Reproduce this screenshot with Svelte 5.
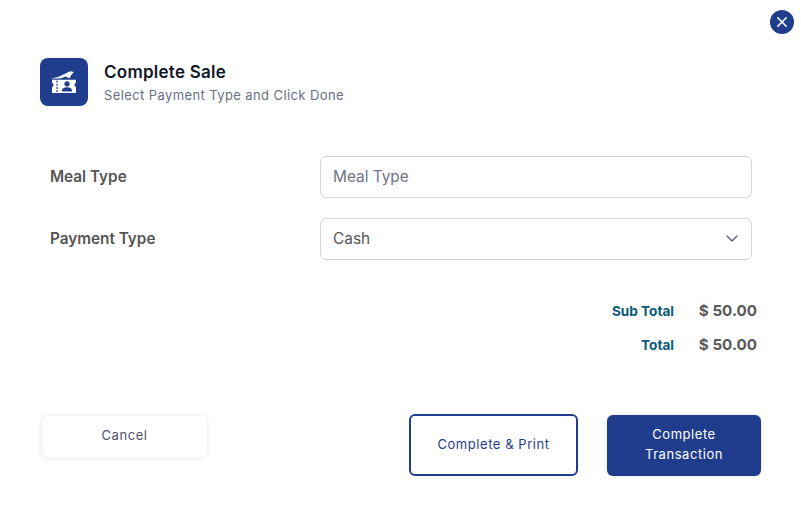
<script lang="ts">
  let mealType = $state('');
  let paymentType = $state('Cash');
</script>

<div class="modal">
  <div class="close-row">
    <button type="button" class="close" aria-label="Close">
      <svg viewBox="0 0 12 12" width="12" height="12" fill="none" stroke="#fff" stroke-width="1.6" stroke-linecap="round">
        <path d="M1.8 1.8l8.4 8.4M10.2 1.8l-8.4 8.4" />
      </svg>
    </button>
  </div>

  <header class="head">
    <div class="badge">
      <svg viewBox="0 0 26 24" width="26" height="24" fill="#fff">
        <path d="M0 8.6 7 7 19.4 1.2 23 2 20.6 4.4 18.4 8.4 15 6.4 9 8.6z" />
        <path fill-rule="evenodd" d="M1 9.8h24v3a2.2 2.2 0 0 0 0 4.2V23H1v-6a2.2 2.2 0 0 0 0-4.2zM16 11.2a2.7 2.7 0 1 0 .01 0zM10.8 21.4h10.4c0-3-2-4.2-5.2-4.2s-5.2 1.2-5.2 4.2zM5.4 10.6v2h1.2v-2zm0 3.2v2h1.2v-2zm0 3.2v2h1.2v-2zm0 3v2h1.2v-2z" />
      </svg>
    </div>
    <div class="titles">
      <h1>Complete Sale</h1>
      <p>Select Payment Type and Click Done</p>
    </div>
  </header>

  <div class="form">
    <label class="row">
      <span>Meal Type</span>
      <input type="text" placeholder="Meal Type" bind:value={mealType} />
    </label>
    <label class="row">
      <span>Payment Type</span>
      <div class="select-wrap">
        <select bind:value={paymentType}>
          <option>Cash</option>
          <option>Card</option>
        </select>
        <svg class="chev" viewBox="0 0 12 7" width="12" height="7" fill="none" stroke="#5f6676" stroke-width="1.5" stroke-linecap="round" stroke-linejoin="round">
          <path d="M1 1l5 5 5-5" />
        </svg>
      </div>
    </label>
  </div>

  <div class="totals">
    <div class="total"><span>Sub Total</span><strong>$ 50.00</strong></div>
    <div class="total"><span>Total</span><strong>$ 50.00</strong></div>
  </div>

  <footer class="actions">
    <button type="button" class="btn cancel">Cancel</button>
    <div class="right">
      <button type="button" class="btn outline">Complete &amp; Print</button>
      <button type="button" class="btn solid">Complete Transaction</button>
    </div>
  </footer>
</div>

<style>
  :global(body) {
    margin: 0;
    background: #fff;
  }
  .modal {
    width: 801px;
    height: 511px;
    box-sizing: border-box;
    padding: 10px 7px 0 40px;
    font-family: Inter, "Liberation Sans", sans-serif;
    color: #5a5a5a;
  }
  .close-row {
    display: flex;
    justify-content: flex-end;
    height: 24px;
  }
  .close {
    width: 24px;
    height: 24px;
    padding: 0;
    border: none;
    border-radius: 50%;
    background: #1f3d8c;
    display: flex;
    align-items: center;
    justify-content: center;
    cursor: pointer;
  }
  .head {
    display: flex;
    align-items: center;
    gap: 16px;
    margin-top: 24px;
  }
  .badge {
    width: 48px;
    height: 48px;
    border-radius: 8px;
    background: #1f3d8c;
    display: flex;
    align-items: center;
    justify-content: center;
  }
  h1 {
    margin: 2px 0 0;
    font-size: 17px;
    line-height: 20px;
    font-weight: 600;
    letter-spacing: 0.25px;
    color: #101828;
  }
  .titles p {
    margin: 4px 0 0;
    font-size: 13px;
    line-height: 18px;
    letter-spacing: 0.4px;
    color: #667085;
  }
  .form {
    margin-top: 50px;
    width: 712px;
    display: flex;
    flex-direction: column;
    gap: 20px;
  }
  .row {
    display: grid;
    grid-template-columns: 270px 432px;
    align-items: center;
    padding-left: 10px;
  }
  .row span {
    padding-bottom: 2px;
    font-size: 15.3px;
    font-weight: 600;
    color: #555;
  }
  input,
  select {
    width: 100%;
    height: 42px;
    box-sizing: border-box;
    padding: 0 12px 2px;
    border: 1px solid #d5d8e0;
    border-radius: 6px;
    background: #fff;
    font: inherit;
    font-size: 15.4px;
    color: #555;
    outline: none;
    appearance: none;
  }
  input::placeholder {
    color: #6f7686;
    opacity: 1;
  }
  .select-wrap {
    position: relative;
  }
  .chev {
    position: absolute;
    right: 14px;
    top: 17px;
    pointer-events: none;
  }
  .totals {
    margin-top: 40px;
    width: 717px;
    display: flex;
    flex-direction: column;
    gap: 13px;
  }
  .total {
    display: grid;
    grid-template-columns: 1fr 83px;
    align-items: center;
    height: 21px;
    text-align: right;
  }
  .total span {
    font-size: 13.6px;
    font-weight: 700;
    color: #0b5a78;
  }
  .total strong {
    font-size: 15.2px;
    font-weight: 700;
    color: #5a5a5a;
  }
  .actions {
    margin-top: 59px;
    width: 721px;
    display: flex;
    justify-content: space-between;
    align-items: flex-start;
  }
  .right {
    display: flex;
    gap: 29px;
    align-items: flex-end;
  }
  .btn {
    box-sizing: border-box;
    font: inherit;
    font-size: 13px;
    line-height: 20px;
    letter-spacing: 0.55px;
    border-radius: 6px;
    cursor: pointer;
  }
  .cancel {
    width: 167px;
    height: 43px;
    margin: 1px 0 0 1px;
    padding-bottom: 4px;
    border: 1px solid #f3f3f5;
    background: #fff;
    color: #4d5566;
    box-shadow: 0 1px 4px rgba(16, 24, 40, 0.08);
  }
  .outline {
    width: 169px;
    height: 62px;
    padding-bottom: 3px;
    border: 2px solid #1f3d8c;
    background: #fff;
    color: #1f3d8c;
  }
  .solid {
    width: 154px;
    height: 61px;
    padding: 0 20px 4px;
    border: none;
    background: #1f3d8c;
    color: #fff;
    box-shadow: 0 0 2px rgba(16, 24, 40, 0.2);
  }
</style>
